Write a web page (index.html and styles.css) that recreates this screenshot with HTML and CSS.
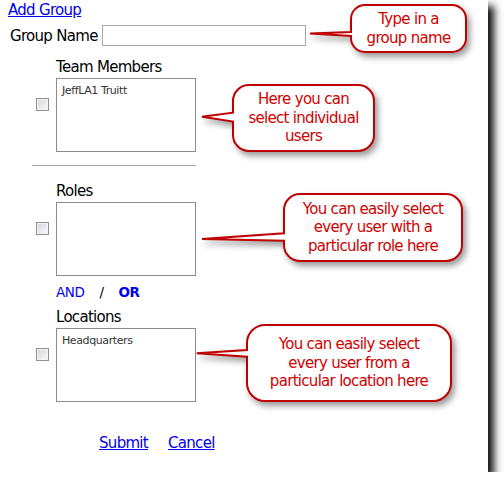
FILE: index.html
```html
<!DOCTYPE html>
<html lang="en">
<head>
  <meta charset="UTF-8" />
  <title>Add Group</title>
  <link rel="stylesheet" href="styles.css">
</head>
<body>
  <div class="page">
    <a class="add-link" href="#">Add Group</a>

    <div class="name-row">
      <label class="name-label" for="group-name">Group Name</label>
      <input id="group-name" class="name-input" type="text">
    </div>

    <div class="group group-members">
      <input type="checkbox" class="check">
      <div class="group-body">
        <div class="group-label">Team Members</div>
        <div class="listbox">
          <div class="option">JeffLA1 Truitt</div>
        </div>
      </div>
    </div>

    <hr class="divider">

    <div class="group group-roles">
      <input type="checkbox" class="check">
      <div class="group-body">
        <div class="group-label">Roles</div>
        <div class="listbox"></div>
      </div>
    </div>

    <div class="logic">
      <span class="and">AND</span>
      <span class="slash">/</span>
      <span class="or">OR</span>
    </div>

    <div class="group group-locations">
      <input type="checkbox" class="check">
      <div class="group-body">
        <div class="group-label">Locations</div>
        <div class="listbox">
          <div class="option">Headquarters</div>
        </div>
      </div>
    </div>

    <div class="actions">
      <a href="#">Submit</a>
      <a href="#">Cancel</a>
    </div>

    <!-- help bubbles -->
    <div class="callout callout-name">
      <svg class="bubble" width="117" height="49">
        <path d="M15,1 H102 A14 14 0 0 1 116,15 V34 A14 14 0 0 1 102,48 H15 A14 14 0 0 1 1,34 V32 L-40,29.5 L1,28 V15 A14 14 0 0 1 15,1 Z"/>
      </svg>
      <p>Type in a<br>group name</p>
    </div>

    <div class="callout callout-members">
      <svg class="bubble" width="143" height="68">
        <path d="M17,1 H126 A16 16 0 0 1 142,17 V51 A16 16 0 0 1 126,67 H17 A16 16 0 0 1 1,51 V37.5 L-30,32.7 L1,28.7 V17 A16 16 0 0 1 17,1 Z"/>
      </svg>
      <p>Here you can<br>select individual<br>users</p>
    </div>

    <div class="callout callout-roles">
      <svg class="bubble" width="180" height="69">
        <path d="M17,1 H163 A16 16 0 0 1 179,17 V52 A16 16 0 0 1 163,68 H17 A16 16 0 0 1 1,52 V47.7 L-81,46 L1,40.3 V17 A16 16 0 0 1 17,1 Z"/>
      </svg>
      <p>You can easily select<br>every user with a<br>particular role here</p>
    </div>

    <div class="callout callout-locations">
      <svg class="bubble" width="206" height="78">
        <path d="M19,1 H187 A18 18 0 0 1 205,19 V59 A18 18 0 0 1 187,77 H19 A18 18 0 0 1 1,59 V32.7 L-49.3,29.3 L1,26 V19 A18 18 0 0 1 19,1 Z"/>
      </svg>
      <p>You can easily select<br>every user from a<br>particular location here</p>
    </div>
  </div>
</body>
</html>
```

FILE: styles.css
```css
html, body {
  margin: 0;
  padding: 0;
  background: #fff;
  overflow: hidden;
}

body {
  font-family: "DejaVu Sans", Verdana, sans-serif;
  font-size: 15px;
  letter-spacing: -0.7px;
  line-height: 18px;
  color: #000;
}

.page {
  position: relative;
  width: 488px;
  height: 472px;
  background: #fff;
  box-shadow: 6px 6px 8px rgba(0, 0, 0, 0.95);
}

a {
  color: #0000ee;
  text-decoration: underline;
}

.add-link {
  display: block;
  width: max-content;
  margin-left: 8px;
  padding-top: 1px;
}

/* group name */
.name-row {
  display: flex;
  align-items: center;
  margin-top: 6px;
  padding-left: 10px;
}

.name-label {
  width: 92px;
}

.name-input {
  box-sizing: border-box;
  width: 204px;
  height: 21px;
  margin: 0;
  border: 1px solid #a9a9a9;
  background: #fff;
}

/* selection groups */
.group {
  display: flex;
  align-items: flex-start;
  gap: 7px;
  padding-left: 36px;
}

.group-members { margin-top: 12px; }
.group-roles { margin-top: 16px; }
.group-locations { margin-top: 7px; }

.check {
  appearance: none;
  box-sizing: border-box;
  width: 13px;
  height: 13px;
  margin: 40px 0 0;
  border: 1px solid #8f8f8f;
  background: linear-gradient(135deg, #d2d5dd, #fbfbfb);
  box-shadow: inset 0 0 0 1px #f4f4f4;
}

.group-label {
  margin-bottom: 2px;
}

.listbox {
  box-sizing: border-box;
  width: 140px;
  height: 74px;
  padding: 5px 5px 0;
  border: 1px solid #8c8c8c;
  background: #fff;
}

.option {
  font-size: 11px;
  line-height: 13px;
  letter-spacing: -0.4px;
  color: #333;
}

.divider {
  width: 164px;
  height: 0;
  margin: 13px 0 0 32px;
  border: 0;
  border-top: 1px solid #a8a8a8;
}

/* and / or */
.logic {
  margin-top: 7px;
  padding-left: 56px;
  font-size: 13.5px;
  letter-spacing: -0.4px;
}

.and {
  color: #0000ee;
}

.slash {
  margin: 0 11px;
}

.or {
  color: #0000ee;
  font-weight: bold;
}

.actions {
  display: flex;
  gap: 20px;
  margin-top: 32px;
  padding-left: 99px;
}

/* help bubbles */
.callout {
  position: absolute;
  display: flex;
  align-items: center;
  justify-content: center;
  text-align: center;
  color: #d00000;
  line-height: 18.5px;
}

.callout p {
  position: relative;
  margin: 0;
}

.bubble {
  position: absolute;
  left: 0;
  top: 0;
  overflow: visible;
  filter: drop-shadow(3px 4px 3px rgba(0, 0, 0, 0.4));
}

.bubble path {
  fill: #fff;
  stroke: #c00000;
  stroke-width: 2;
}

.callout-name {
  left: 350px;
  top: 4px;
  width: 117px;
  height: 49px;
}

.callout-members {
  left: 232px;
  top: 84px;
  width: 143px;
  height: 68px;
}

.callout-roles {
  left: 283px;
  top: 193px;
  width: 180px;
  height: 69px;
}

.callout-locations {
  left: 246px;
  top: 324px;
  width: 206px;
  height: 78px;
}
```
